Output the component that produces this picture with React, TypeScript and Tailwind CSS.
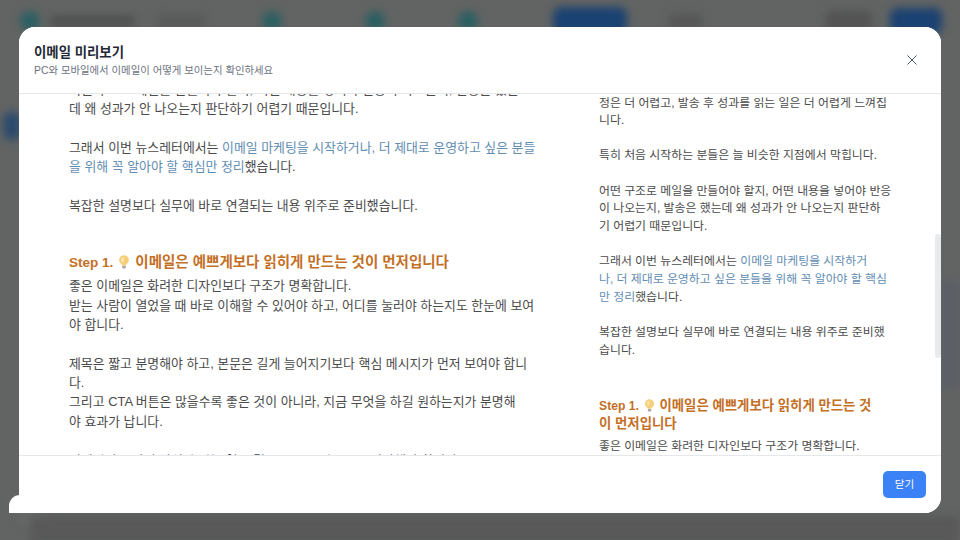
import React from "react";

const font = { fontFamily: '"Liberation Sans", "Noto Sans CJK KR", sans-serif' };

function Bulb({ size }: { size: number }) {
  return (
    <svg width={size} height={size} viewBox="0 0 16 16" className="inline-block align-[-3px] -mx-[1px]">
      <path d="M8 1.2a4.8 4.8 0 0 0-2.9 8.6c.6.5.9 1.1 1 1.7h3.8c.1-.6.4-1.2 1-1.7A4.8 4.8 0 0 0 8 1.2z" fill="#f6cf7a" />
      <path d="M8 3a3 3 0 0 0-1.8 5.3L8 7.5z" fill="#fbe3ab" />
      <rect x="6.2" y="11.8" width="3.6" height="2.6" rx="0.8" fill="#a9a7a2" />
    </svg>
  );
}

const Link = ({ children }: { children: React.ReactNode }) => (
  <span className="text-[#628db2]">{children}</span>
);

function Blobs() {
  return (
    <div className="absolute inset-0 blur-[4px]">
      <div className="flex items-center h-[40px] pt-[2px]">
        <div className="ml-[20px] w-[20px] h-[20px] rounded-full bg-[#2a5f62]" />
        <div className="ml-[10px] w-[85px] h-[10px] rounded bg-[#4c4e4d]" />
        <div className="ml-[22px] w-[48px] h-[14px] rounded bg-[#585a59]" />
        <div className="ml-[57px] w-[20px] h-[20px] rounded-full bg-[#2a5f62]" />
        <div className="ml-[83px] w-[20px] h-[20px] rounded-full bg-[#2a5f62]" />
        <div className="ml-[73px] w-[20px] h-[20px] rounded-full bg-[#2a5f62]" />
        <div className="ml-[75px] w-[74px] h-[28px] rounded-lg bg-[#1a4272]" />
        <div className="ml-[41px] w-[34px] h-[14px] rounded bg-[#555655]" />
        <div className="ml-[123px] w-[48px] h-[22px] rounded-lg bg-[#545454]" />
        <div className="ml-[17px] w-[52px] h-[26px] rounded-lg bg-[#1a4272]" />
      </div>
      <div className="absolute left-[3px] top-[112px] w-[18px] h-[28px] rounded-lg bg-[#2b4a6e]" />
      <div className="absolute left-[941px] top-[280px] w-[19px] h-[110px] bg-[#5c5f66]" />
      <div className="absolute left-[20px] top-[500px] w-[28px] h-[30px] rounded-full bg-[#666868]" />
      <div className="absolute left-[30px] top-[515px] w-[930px] h-[30px] bg-[#595959]" />
    </div>
  );
}

export default function App() {
  return (
    <div className="relative w-[960px] h-[540px] overflow-hidden bg-[#626463]" style={font}>
      <Blobs />
      <div className="absolute left-[9px] top-[495px] w-[40px] h-[18px] bg-white rounded-tl-[11px]" />
      <div className="relative pt-[27px] pl-[19px]">
        <div className="w-[922px] h-[486px] flex flex-col rounded-[16px] rounded-bl-none bg-white overflow-hidden">
          <header className="h-[67px] shrink-0 flex items-center justify-between border-b border-[#e5e7eb] pl-[15px] pr-[22px] relative z-10 bg-white">
            <div className="pt-[2px]">
              <h2 className="text-[13.4px] leading-[20px] font-semibold text-[#1f2937]">이메일 미리보기</h2>
              <p className="text-[10.4px] leading-[16px] text-[#6b7280]">PC와 모바일에서 이메일이 어떻게 보이는지 확인하세요</p>
            </div>
            <svg width="14" height="14" viewBox="0 0 14 14" fill="none" stroke="#4b5563" strokeWidth="1" strokeLinecap="round">
              <path d="M2.8 2.8l8.4 8.4M11.2 2.8l-8.4 8.4" />
            </svg>
          </header>
          <main className="flex-1 min-h-0 flex overflow-hidden relative">
            <section className="w-[580px] shrink-0 pl-[50px] pr-[60px] text-[12.9px] leading-[19.35px] text-[#4b4b4b] overflow-hidden">
              <div className="mt-[-14px]">
                <p>어떤 구조로 메일을 만들어야 할지, 어떤 내용을 넣어야 반응이 나오는지, 발송은 했는<br />데 왜 성과가 안 나오는지 판단하기 어렵기 때문입니다.</p>
                <p className="mt-[19.35px]">그래서 이번 뉴스레터에서는 <Link>이메일 마케팅을 시작하거나, 더 제대로 운영하고 싶은 분들<br />을 위해 꼭 알아야 할 핵심만 정리</Link>했습니다.</p>
                <p className="mt-[19.35px]">복잡한 설명보다 실무에 바로 연결되는 내용 위주로 준비했습니다.</p>
                <h3 className="mt-[37px] text-[14.5px] leading-[20px] font-bold text-[#c46f26]"><span className="text-[13.5px]">Step 1.</span> <Bulb size={16} /> 이메일은 예쁘게보다 읽히게 만드는 것이 먼저입니다</h3>
                <p className="mt-[3px]">좋은 이메일은 화려한 디자인보다 구조가 명확합니다.<br />받는 사람이 열었을 때 바로 이해할 수 있어야 하고, 어디를 눌러야 하는지도 한눈에 보여<br />야 합니다.</p>
                <p className="mt-[19.35px]">제목은 짧고 분명해야 하고, 본문은 길게 늘어지기보다 핵심 메시지가 먼저 보여야 합니<br />다.<br />그리고 CTA 버튼은 많을수록 좋은 것이 아니라, 지금 무엇을 하길 원하는지가 분명해<br />야 효과가 납니다.</p>
                <p className="mt-[19.35px]">이메일의 시각적 장식과 기능 역시 결국 구조를 기준으로 판단해야 합니다.</p>
              </div>
            </section>
            <section className="w-[300px] shrink-0 text-[11.9px] leading-[17.66px] text-[#4b4b4b] overflow-hidden">
              <div className="mt-[0.5px]">
                <p>정은 더 어렵고, 발송 후 성과를 읽는 일은 더 어렵게 느껴집<br />니다.</p>
                <p className="mt-[17.66px]">특히 처음 시작하는 분들은 늘 비슷한 지점에서 막힙니다.</p>
                <p className="mt-[17.66px]">어떤 구조로 메일을 만들어야 할지, 어떤 내용을 넣어야 반응<br />이 나오는지, 발송은 했는데 왜 성과가 안 나오는지 판단하<br />기 어렵기 때문입니다.</p>
                <p className="mt-[17.66px]">그래서 이번 뉴스레터에서는 <Link>이메일 마케팅을 시작하거<br />나, 더 제대로 운영하고 싶은 분들을 위해 꼭 알아야 할 핵심<br />만 정리</Link>했습니다.</p>
                <p className="mt-[17.66px]">복잡한 설명보다 실무에 바로 연결되는 내용 위주로 준비했<br />습니다.</p>
                <h3 className="mt-[37.5px] text-[13.4px] leading-[18.5px] font-bold text-[#c46f26]"><span className="text-[12.2px]">Step 1.</span> <Bulb size={15} /> 이메일은 예쁘게보다 읽히게 만드는 것<br />이 먼저입니다</h3>
                <p className="mt-[4px]">좋은 이메일은 화려한 디자인보다 구조가 명확합니다.</p>
              </div>
            </section>
            <div className="absolute right-0 top-[140px] w-[6px] h-[124px] rounded-full bg-[#e8eaed]" />
          </main>
          <footer className="h-[58px] shrink-0 flex items-center justify-end border-t border-[#e5e7eb] pr-[15px] bg-white">
            <button className="w-[43px] h-[27px] rounded-[5px] bg-[#3b82f6] text-white text-[10.5px]">닫기</button>
          </footer>
        </div>
      </div>
    </div>
  );
}
